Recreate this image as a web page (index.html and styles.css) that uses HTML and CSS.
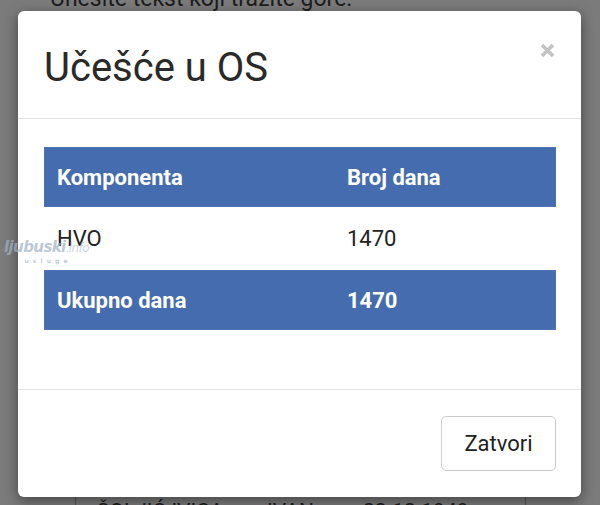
FILE: index.html
```html
<!DOCTYPE html>
<html lang="hr">
<head>
<meta charset="utf-8">
<title>Učešće u OS</title>
<link rel="stylesheet" href="styles.css">
</head>
<body>
<div class="page">
  <p class="bg-top">Unesite tekst koji tražite gore.</p>
  <div class="bg-table">
    <span class="bg-name">ŠOLJIĆ IVICA</span>
    <span class="bg-father">IVAN</span>
    <span class="bg-date">22.12.1949</span>
  </div>
</div>

<div class="modal">
  <div class="modal-header">
    <h4 class="modal-title">Učešće u OS</h4>
    <button class="close" type="button" aria-label="Close">
      <svg width="15" height="15" viewBox="0 0 15 15"><path d="M2 2 L13 13 M13 2 L2 13" stroke="#c3c3c3" stroke-width="3.6" stroke-linecap="butt"/></svg>
    </button>
  </div>
  <div class="modal-body">
    <table class="grid">
      <thead>
        <tr><th class="c1">Komponenta</th><th>Broj dana</th></tr>
      </thead>
      <tbody>
        <tr><td class="c1">HVO</td><td>1470</td></tr>
      </tbody>
      <tfoot>
        <tr><th class="c1">Ukupno dana</th><th>1470</th></tr>
      </tfoot>
    </table>
  </div>
  <div class="modal-footer">
    <button class="btn" type="button">Zatvori</button>
  </div>
</div>

<div class="watermark">
  <span class="wm-main">ljubuski<span class="wm-dot">.info</span></span>
  <span class="wm-sub">u s l u g e</span>
</div>
</body>
</html>
```

FILE: styles.css
```css
html, body {
  margin: 0;
  padding: 0;
}
body {
  width: 600px;
  height: 505px;
  overflow: hidden;
  background: #7b7b7b;
  font-family: Roboto, "Noto Sans", sans-serif;
  position: relative;
}
.page {
  height: 505px;
  display: flex;
  flex-direction: column;
  justify-content: space-between;
}
.bg-top {
  margin: -15px 0 0 50px;
  font-size: 23px;
  line-height: 28px;
  color: #1d1d1d;
}
.bg-table {
  margin: 0 0 0 75px;
  width: 449px;
  height: 8px;
  border-left: 1px solid #555;
  border-right: 1px solid #555;
  display: flex;
  align-items: flex-start;
  font-size: 21px;
  line-height: 24px;
  color: #1d1d1d;
  overflow: visible;
}
.bg-name { margin-left: 21px; width: 170px; margin-top: 2px; }
.bg-father { width: 96px; margin-top: 2px; }
.bg-date { margin-top: 2px; }

.modal {
  position: absolute;
  left: 18px;
  top: 11px;
  width: 563px;
  height: 486px;
  background: #fff;
  border-radius: 6px;
  box-shadow: 0 4px 14px rgba(0, 0, 0, 0.45);
  display: flex;
  flex-direction: column;
}
.modal-header {
  height: 107px;
  border-bottom: 1px solid #e3e3e3;
  display: flex;
  align-items: center;
  justify-content: space-between;
  padding: 0 26px;
}
.modal-title {
  margin: 0;
  font-size: 40px;
  font-weight: 400;
  color: #2a2a2a;
  line-height: 46px;
  padding-top: 6px;
}
.close {
  align-self: flex-start;
  margin-top: 32px;
  padding: 0;
  border: 0;
  background: none;
  width: 15px;
  height: 15px;
  display: block;
}
.close svg { display: block; }

.modal-body {
  height: 270px;
  padding: 28px 26px 0 26px;
  box-sizing: border-box;
}
.grid {
  width: 512px;
  border-collapse: collapse;
  font-size: 22px;
}
.grid th, .grid td {
  text-align: left;
  padding: 0 13px;
}
.grid .c1 { width: 264px; }
.grid thead tr, .grid tfoot tr {
  background: #456cae;
  outline: 1px solid #4a72b4;
  outline-offset: -1px;
}
.grid thead th, .grid tfoot th {
  color: #fff;
  font-weight: 700;
  height: 60px;
}
.grid tbody td {
  color: #222;
  height: 63px;
  font-weight: 400;
}

.modal-footer {
  flex: 1;
  border-top: 1px solid #e3e3e3;
  display: flex;
  justify-content: flex-end;
  align-items: flex-start;
  padding: 26px 25px 0 0;
}
.btn {
  width: 115px;
  height: 55px;
  border: 1px solid #cccccc;
  border-radius: 5px;
  background: #fff;
  font-family: Roboto, "Noto Sans", sans-serif;
  font-size: 22px;
  color: #222;
  padding: 0;
}

.watermark {
  position: absolute;
  left: 4px;
  top: 238px;
  display: flex;
  flex-direction: column;
  align-items: center;
  opacity: 0.7;
}
.wm-main {
  font-family: "DejaVu Sans", sans-serif;
  font-style: italic;
  font-weight: 700;
  font-size: 15px;
  letter-spacing: -0.6px;
  color: #9fb2c6;
  line-height: 18px;
}
.wm-dot {
  font-weight: 400;
  font-size: 12px;
  color: #b8c6d4;
}
.wm-sub {
  font-family: "DejaVu Sans", sans-serif;
  font-size: 6px;
  font-weight: 700;
  color: #a9b8c8;
  letter-spacing: 1px;
  line-height: 8px;
}
```
